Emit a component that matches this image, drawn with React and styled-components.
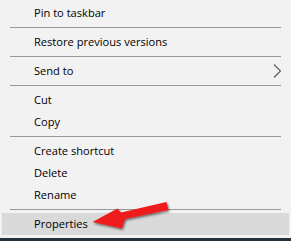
import React from "react";
import styled, { createGlobalStyle } from "styled-components";

const Global = createGlobalStyle`
  html, body { margin: 0; padding: 0; }
  body {
    background: #26313c;
    width: 291px;
    height: 241px;
    overflow: hidden;
  }
`;

const Menu = styled.div`
  position: relative;
  box-sizing: border-box;
  width: 291px;
  height: 238px;
  background: #f2f2f2;
  padding: 2px 2px 3px 2px;
  display: flex;
  flex-direction: column;
  font-family: "Open Sans", "Noto Sans", sans-serif;
  font-size: 11.1px;
  color: #000;
`;

const Item = styled.div`
  position: relative;
  height: 22px;
  display: flex;
  align-items: center;
  padding-left: 32px;
  padding-bottom: 1px;
  box-sizing: border-box;
  background: ${(p) => (p.$active ? "#d9d9d9" : "transparent")};
  white-space: nowrap;
`;

const Label = styled.span`
  flex: 1;
`;

const Chevron = styled.svg`
  width: 9px;
  height: 14px;
  margin-right: 7px;
  margin-top: 1px;
`;

const Separator = styled.div`
  height: 1px;
  margin: 3px 8px;
  background: #999999;
`;

const Arrow = styled.svg`
  position: absolute;
  left: 0;
  top: 0;
  width: 291px;
  height: 241px;
  pointer-events: none;
  overflow: visible;
`;

const items = [
  { label: "Pin to taskbar" },
  "sep",
  { label: "Restore previous versions" },
  "sep",
  { label: "Send to", sub: true },
  "sep",
  { label: "Cut" },
  { label: "Copy" },
  "sep",
  { label: "Create shortcut" },
  { label: "Delete" },
  { label: "Rename" },
  "sep",
  { label: "Properties", active: true },
];

export default function App() {
  return (
    <>
      <Global />
      <Menu>
        {items.map((it, i) =>
          it === "sep" ? (
            <Separator key={i} />
          ) : (
            <Item key={i} $active={it.active}>
              <Label>{it.label}</Label>
              {it.sub && (
                <Chevron viewBox="0 0 9 14">
                  <polyline
                    points="1,0.5 7.5,7 1,13.5"
                    fill="none"
                    stroke="#5a5a5a"
                    strokeWidth="1.1"
                  />
                </Chevron>
              )}
            </Item>
          )
        )}
        <Arrow viewBox="0 0 291 241">
          <defs>
            <filter id="sh" x="-20%" y="-50%" width="140%" height="200%">
              <feDropShadow dx="1" dy="1.5" stdDeviation="1" floodColor="#000" floodOpacity="0.55" />
            </filter>
          </defs>
          <polygon
            points="166.5,202 168.5,210 125,219 122,228.5 92.5,222 117.5,208.5 121,212.5"
            fill="#ee1c1c"
            filter="url(#sh)"
          />
        </Arrow>
      </Menu>
    </>
  );
}
